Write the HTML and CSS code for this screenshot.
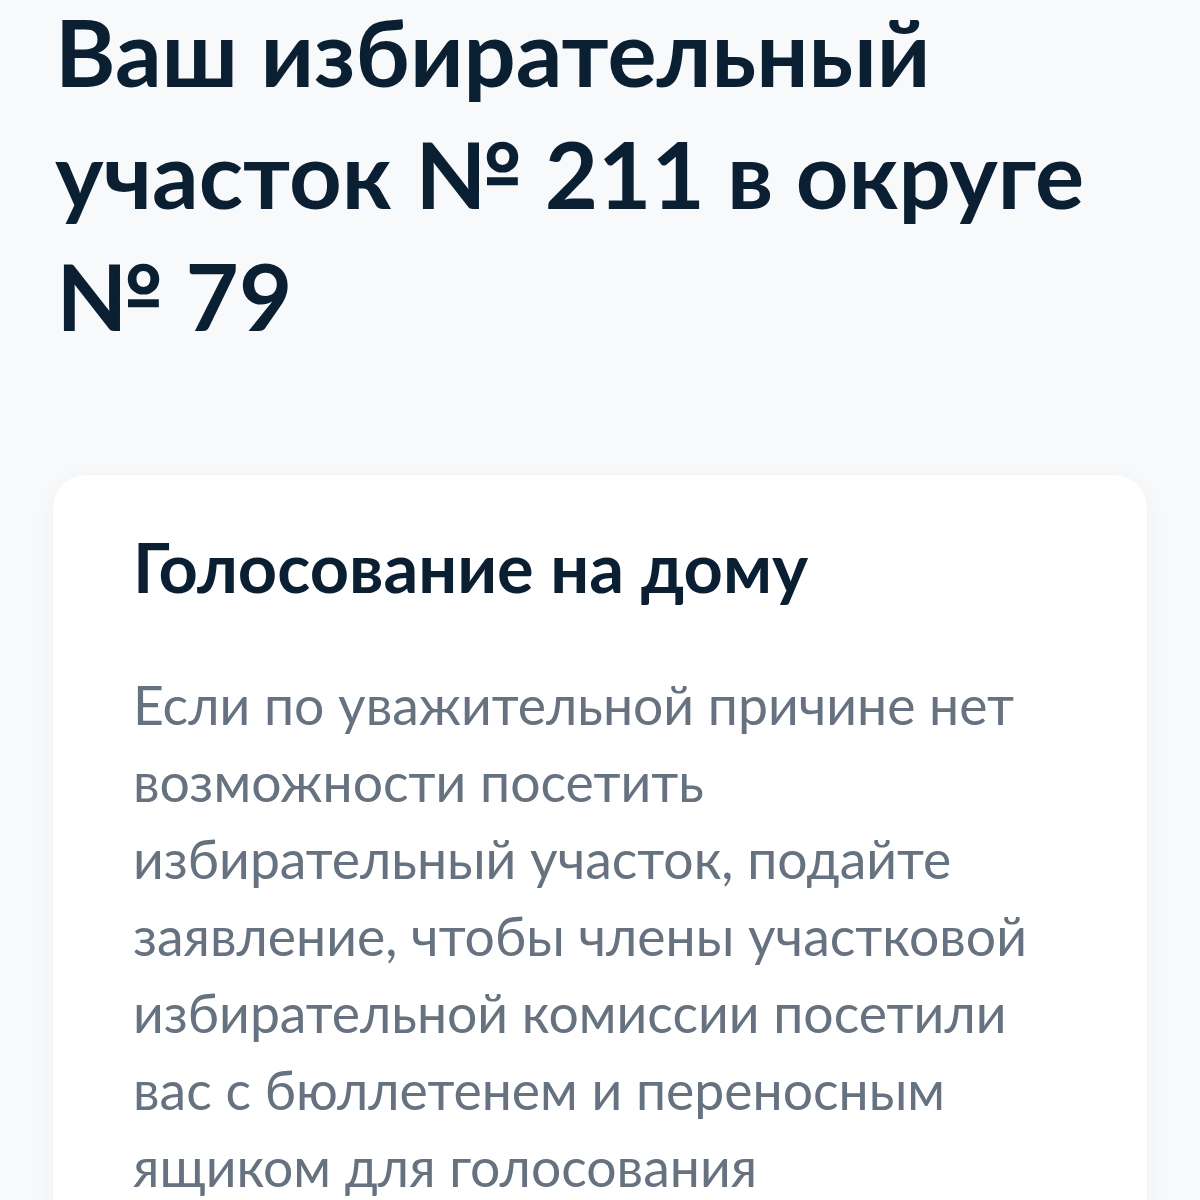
FILE: index.html
```html
<!DOCTYPE html>
<html lang="ru">
<head>
    <meta charset="UTF-8">
    <meta name="viewport" content="width=device-width, initial-scale=1.0">
    <title>Избирательный участок</title>
    <link rel="stylesheet" href="styles.css">
</head>
<body>

    <main class="page">
        <!-- Заголовок участка -->
        <h1 class="page-title">Ваш избирательный участок №&nbsp;211 в&nbsp;округе №&nbsp;79</h1>

        <!-- Карточка голосования на дому -->
        <section class="card">
            <h2 class="card-title">Голосование на дому</h2>
            <p class="card-text">Если по уважительной причине нет возможности посетить избирательный участок, подайте заявление, чтобы члены участковой избирательной комиссии посетили вас с бюллетенем и переносным ящиком для голосования</p>
        </section>
    </main>

</body>
</html>
```

FILE: styles.css
```css
/* Basic Reset */
* {
    margin: 0;
    padding: 0;
    box-sizing: border-box;
}

body {
    font-family: 'Lato', 'Noto Sans', sans-serif;
    background: #f8f9fb;
    color: #0b1f33;
    overflow: hidden;
}

/* Page scrolled a bit down, so the title starts right at the top */
.page {
    padding: 0 53px;
}

/* Title */
.page-title {
    padding-left: 2px;
    margin-top: -9px;
    font-size: 92px;
    font-weight: 700;
    line-height: 122px;
    color: #0b1f33;
}

/* Card */
.card {
    margin-top: 118px;
    width: 1094px;
    background: #fff;
    border-radius: 33px;
    padding: 52px 80px 60px;
    box-shadow: 0 4px 24px rgba(11, 31, 51, 0.04);
}

.card-title {
    font-size: 68.5px;
    font-weight: 700;
    line-height: 80px;
    color: #0b1f33;
}

.card-text {
    margin-top: 59px;
    font-size: 53.5px;
    font-weight: 400;
    line-height: 77px;
    color: #66727f;
}
```
